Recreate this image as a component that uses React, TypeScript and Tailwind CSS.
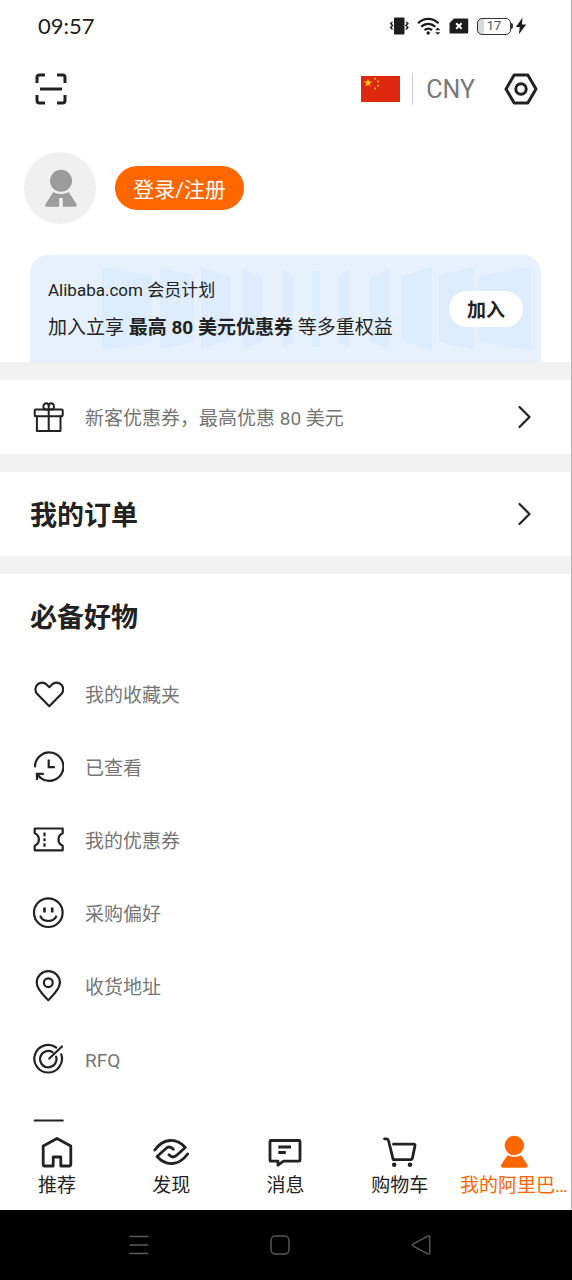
import type { ReactNode } from "react";

function LineIcon({ children, className = "size-8", box = 32, width = 2 }: { children: ReactNode; className?: string; box?: number; width?: number }) {
  return (
    <svg viewBox={`0 0 ${box} ${box}`} className={`shrink-0 ${className}`} fill="none" stroke="currentColor" strokeWidth={width} strokeLinecap="round" strokeLinejoin="round" aria-hidden="true">
      {children}
    </svg>
  );
}

const Chevron = () => (
  <LineIcon box={24} className="size-6" width={2.2}>
    <path d="M8.500 2 18.500 12l-10 10" />
  </LineIcon>
);

const GiftIcon = () => (
  <LineIcon>
    <rect x="2.700" y="8.500" width="28" height="6.800" rx="1" />
    <path d="M4.900 15.300V30h23.600V15.300M16.700 8.500V30" />
    <path d="M16.700 8.500h-4c-2.600-2.500-1-6.300 1.500-6.300 1.700 0 2.500 1.300 2.500 3.300Zm0 0h4c2.600-2.500 1-6.300-1.500-6.300-1.700 0-2.500 1.300-2.500 3.300Z" />
  </LineIcon>
);

const services: { label: string; icon: ReactNode }[] = [
  {
    label: "我的收藏夹",
    icon: <path d="M17.300 28.200 5.500 16.300C2.700 13.400 2.900 9.300 5.200 6.800 7.800 4 12 4 14.600 6.500l2.700 2.700L20 6.500c2.600-2.500 6.800-2.500 9.400.3 2.300 2.500 2.500 6.600-.3 9.500Z" />,
  },
  {
    label: "已查看",
    icon: (
      <>
        <path d="M3 15.500a14.200 14.200 0 1 1 5.800 11.600l-4-4" />
        <path d="M5 29v-6.200h6.800M16.700 8.500v7.700h6.200" strokeLinecap="butt" strokeLinejoin="miter" />
      </>
    ),
  },
  {
    label: "我的优惠券",
    icon: (
      <>
        <path d="M2.700 4.500h28v4.800c-5.600 2.300-5.600 10.100 0 12.400v4.600h-28v-4.600c5.600-2.300 5.600-10.100 0-12.400Z" />
        <path d="M12.500 8.500v3.700M12.500 14.200v3M12.500 19.200v3.500" strokeLinecap="butt" />
      </>
    ),
  },
  {
    label: "采购偏好",
    icon: (
      <>
        <circle cx="16.300" cy="15.700" r="14.300" />
        <path d="M8.500 19.500c2.700 6 12.900 6 15.600 0" />
        <path d="M12.500 10.500v5M20.200 10.500v5" strokeWidth="2.600" strokeLinecap="butt" />
      </>
    ),
  },
  {
    label: "收货地址",
    icon: (
      <>
        <path d="M16.300 30.200C12.500 26 4.700 19.200 4.700 12.700a11.600 11.600 0 0 1 23.200 0c0 6.500-7.800 13.300-11.600 17.500Z" />
        <circle cx="16.300" cy="12.700" r="4.400" />
      </>
    ),
  },
  {
    label: "RFQ",
    icon: (
      <>
        <path d="M24.200 4.500A13.800 13.800 0 1 0 29.300 11.500M20.600 9.200A8.200 8.200 0 1 0 24.100 13.700" />
        <path d="M17.300 15.500 30 3.500" />
      </>
    ),
  },
];

function ServiceRow({ icon, label }: { icon: ReactNode; label?: string }) {
  return (
    <li>
      <a href="#" className="flex h-[73px] items-center gap-[21px] px-8">
        <LineIcon width={2.2}>{icon}</LineIcon>
        {label && <span className="pt-1 text-[19px] leading-7 text-[#767676]">{label}</span>}
      </a>
    </li>
  );
}

const tabs: { label: string; icon: ReactNode; active?: boolean }[] = [
  {
    label: "推荐",
    icon: <path d="M5.500 32a1.500 1.500 0 0 1-1.300-1.500V12L18 4.500 31.800 12v18.500a1.500 1.500 0 0 1-1.300 1.500h-8.700v-9h-7.600v9Z" />,
  },
  {
    label: "发现",
    icon: (
      <>
        <path d="M1.800 16C10.500 4 23.500 3.500 32.300 13.500L24 21C21.500 23.400 18.500 23.400 16 20.800" />
        <path d="M34.600 20C25.900 32 12.900 32.500 4.100 22.500L12.400 15C14.900 12.600 17.900 12.600 20.400 15.200" />
      </>
    ),
  },
  {
    label: "消息",
    icon: (
      <>
        <path d="M4 6.500h28a1 1 0 0 1 1 1v18.700a1 1 0 0 1-1 1H16.500l-5.500 4v-4H4a1 1 0 0 1-1-1V7.500a1 1 0 0 1 1-1Z" />
        <path d="M11.300 13H24M11.300 18.500h7.500" strokeLinecap="butt" />
      </>
    ),
  },
  {
    label: "购物车",
    icon: (
      <>
        <path d="M2.500 4.800h2c1.200 0 1.700.6 2 1.700L11.200 25.700h17.600a1.500 1.500 0 0 0 1.500-1.200L33 11.800c.2-1-.3-1.600-1.300-1.600H11.500" />
        <g fill="currentColor" stroke="none">
          <circle cx="12.200" cy="30.800" r="2.300" />
          <circle cx="28" cy="30.800" r="2.300" />
        </g>
      </>
    ),
  },
  {
    label: "我的阿里巴…",
    active: true,
    icon: (
      <g fill="currentColor" stroke="none">
        <circle cx="18.300" cy="11.500" r="9.700" />
        <path d="M11.500 21.200c4.300 2.200 9.300 2.200 13.600 0L31.300 30.500c1 1.700 0 3.200-1.800 3.200H7c-1.800 0-2.700-1.500-1.700-3.200Z" />
      </g>
    ),
  },
];

function StatusBar() {
  return (
    <div className="flex h-[52px] shrink-0 items-center justify-between pr-11 pl-[38px] text-[#1c1c1c]">
      <span className="font-[Lato,sans-serif] text-[22px] leading-8">09:57</span>
      <div className="flex items-center gap-2">
        <svg viewBox="0 0 20 18" className="h-[18px] w-5" aria-hidden="true">
          <rect x="5" y="0.500" width="10.500" height="17" rx="1" fill="currentColor" />
          <path d="m3.500 5-1.800 1.500L3.500 8.500 1.700 10.500l1.800 2M17 5l1.800 1.500L17 8.500l1.800 2-1.800 2" fill="none" stroke="currentColor" strokeWidth="1.500" />
        </svg>
        <svg viewBox="0 0 24 18" className="h-[18px] w-6" fill="none" stroke="currentColor" strokeWidth="2.200" aria-hidden="true">
          <path d="M1 6.300c6-6 14.500-6 20.500 0M4.200 9.800c4.200-4 9.900-4 14.100 0M7.500 13.200c2.200-2 5.300-2 7.500 0" />
          <circle cx="11.200" cy="16" r="1.700" fill="currentColor" stroke="none" />
          <path d="m18.300 13.200 2.500-2.700 2.500 2.700ZM18.300 15.200h5l-2.500 2.500Z" fill="currentColor" stroke="none" />
        </svg>
        <svg viewBox="0 0 20 16" className="h-4 w-5" aria-hidden="true">
          <path d="M5 .5h13.200a1 1 0 0 1 1 1v13a1 1 0 0 1-1 1H1.500a1 1 0 0 1-1-1V5Z" fill="currentColor" />
          <path d="m7.200 5.300 5.400 5.400m0-5.400-5.400 5.400" stroke="white" strokeWidth="2" />
        </svg>
        <div className="flex items-center gap-0.5">
          <div className="flex items-center">
            <div className="flex h-[17px] w-[34px] items-center justify-center rounded-[5px] border border-[#333] bg-linear-to-r from-[#d8d8d8] from-20% to-white to-20% font-[Roboto,sans-serif] text-[13px] leading-4 text-[#555]">17</div>
            <div className="h-1.5 w-0.5 rounded-r bg-[#333]" />
          </div>
          <svg viewBox="0 0 12 18" className="h-[18px] w-3" aria-hidden="true">
            <path d="M7.500.8.800 10h4l-.9 7.300L11.200 7.500H7Z" fill="currentColor" />
          </svg>
        </div>
      </div>
    </div>
  );
}

function Flag() {
  return (
    <svg viewBox="0 0 39 26" className="h-[26px] w-[39px]" role="img" aria-label="中国">
      <rect width="39" height="26" fill="#de2910" />
      <g fill="#ffce0a">
        <path d="m7 2.500 1 3h3.200L8.600 7.400l1 3L7 8.500l-2.600 1.900 1-3L2.800 5.500H6Z" />
        <circle cx="14" cy="2.800" r="1" />
        <circle cx="17" cy="5.500" r="1" />
        <circle cx="17" cy="9.700" r="1" />
        <circle cx="14" cy="12.500" r="1" />
      </g>
    </svg>
  );
}

function MemberBanner() {
  return (
    <section className="relative mx-[30px] mt-[31px] flex h-[107px] items-center justify-between overflow-hidden rounded-t-[18px] bg-[#e7f1fe] pr-[18px] pl-[18px]">
      <svg viewBox="0 0 511 107" preserveAspectRatio="none" className="absolute inset-0 size-full" fill="#deedfd" aria-hidden="true">
        <path d="M72 12l50 8v68l-50 7ZM130 13l34 7v67l-34 7ZM171 13l29 9v63l-29 9ZM213 14l19 7v66l-19 7ZM253 15l10 4v69l-10 4ZM282 16h8v76h-8ZM319 15l-10 4v69l10 4ZM359 14l-19 7v66l19 7ZM402 12l-30 9v65l30 9ZM444 12l-35 8v67l35 8ZM501 12l-52 8v67l52 8Z" />
      </svg>
      <div className="relative text-[#222]">
        <p className="text-[17px] leading-7">Alibaba.com 会员计划</p>
        <p className="mt-2.5 text-[19px] leading-7">
          加入立享 <b>最高 80 美元优惠券</b> 等多重权益
        </p>
      </div>
      <button type="button" className="relative h-9 w-[74px] rounded-full bg-white pt-1 text-[19px] leading-7 font-bold text-[#222]">
        加入
      </button>
    </section>
  );
}

export default function App() {
  return (
    <div className="flex h-screen flex-col bg-white font-[Roboto,'Noto_Sans_CJK_SC',sans-serif] text-[#222]" lang="zh-CN">
      <div className="flex min-h-0 flex-1 flex-col border-r border-[#b4b4b4]">
        <StatusBar />
        <main className="min-h-0 flex-1 overflow-y-auto [scrollbar-width:none]">
          <header className="flex h-[74px] items-center justify-between pr-8 pl-[33px]">
            <button type="button" aria-label="扫一扫">
              <LineIcon box={36} className="size-9" width={3}>
                <g strokeLinecap="butt">
                  <path d="M4 12V6.500Q4 4 6.500 4H12M24 4h5.500Q32 4 32 6.500V12M32 24v5.500Q32 32 29.500 32H24M12 32H6.500Q4 32 4 29.500V24" />
                  <path d="M7 18h22" />
                </g>
              </LineIcon>
            </button>
            <div className="flex items-center">
              <Flag />
              <div className="mr-[13px] ml-3 h-8 w-px bg-[#cfcfcf]" />
              <button type="button" className="pt-0.5 text-[25px] leading-8 text-[#7a7a7a]">CNY</button>
              <button type="button" className="ml-7" aria-label="设置">
                <LineIcon box={36} className="size-9" width={3}>
                  <path d="M11.200 4h13.600L33 18l-8.200 14H11.200L3 18Z" />
                  <circle cx="18" cy="18" r="5.200" />
                </LineIcon>
              </button>
            </div>
          </header>

          <div className="mt-[26px] flex items-center gap-[19px] px-6">
            <div className="size-[72px] rounded-full bg-[#f0f0f0]">
              <svg viewBox="0 0 72 72" className="size-full" fill="#9c9c9c" aria-hidden="true">
                <circle cx="37" cy="28.700" r="11" />
                <path d="M29.300 40c5 2.700 10.400 2.700 15.400 0L52.400 52c.9 1.500.2 2.700-1.400 2.700H38.800V46h-3.600v8.700H23c-1.600 0-2.300-1.200-1.400-2.700Z" />
              </svg>
            </div>
            <button type="button" className="h-11 w-[129px] rounded-full bg-[#ff6600] pt-1 text-[21px] leading-8 text-white">
              登录/注册
            </button>
          </div>

          <MemberBanner />

          <a href="#" className="flex h-[92px] items-center gap-[21px] border-t-18 border-[#f2f2f2] pr-9 pl-8">
            <GiftIcon />
            <span className="flex-1 pt-1 text-[19px] leading-7 text-[#767676]">新客优惠券，最高优惠 80 美元</span>
            <Chevron />
          </a>

          <a href="#" className="flex h-[120px] items-center justify-between border-y-18 border-[#f2f2f2] pr-9 pl-[30px]">
            <h2 className="pt-1 text-[27px] leading-9 font-bold">我的订单</h2>
            <Chevron />
          </a>

          <section>
            <h2 className="flex h-[83px] items-center pt-1 pl-[30px] text-[27px] leading-9 font-bold">必备好物</h2>
            <ul>
              {services.map((item) => (
                <ServiceRow key={item.label} {...item} />
              ))}
              <ServiceRow icon={<path d="M2.700 4.500h28M2.700 16h28M2.700 27.500h28" />} />
            </ul>
          </section>
        </main>

        <nav className="grid h-[88px] shrink-0 grid-cols-5 bg-white">
          {tabs.map(({ label, icon, active }) => (
            <a key={label} href="#" className={`flex flex-col items-center pt-3 ${active ? "text-[#ff6600]" : "text-[#222]"}`}>
              <LineIcon box={36} className="size-9" width={2.8}>
                {icon}
              </LineIcon>
              <span className="mt-0.5 text-[19px] leading-7 whitespace-nowrap">{label}</span>
            </a>
          ))}
        </nav>
      </div>

      <div className="flex h-[70px] shrink-0 items-center justify-center gap-[121px] bg-black pr-[13px] text-[#5a5a5a]">
        <button type="button" aria-label="菜单">
          <LineIcon box={20} className="size-5" width={1.4}>
            <path d="M1 1.500h18M1 10h18M1 18.500h18" />
          </LineIcon>
        </button>
        <button type="button" aria-label="主屏幕">
          <LineIcon box={20} className="size-5" width={1.400}>
            <rect x="1" y="1" width="18" height="18" rx="4.500" />
          </LineIcon>
        </button>
        <button type="button" aria-label="返回">
          <LineIcon box={20} className="size-5" width={1.400}>
            <path d="M1.800 9.200 16.300 1.300q2.500-1.100 2.500 1.200v15q0 2.300-2.500 1.200L1.800 10.800q-1-.8 0-1.600Z" />
          </LineIcon>
        </button>
      </div>
    </div>
  );
}
